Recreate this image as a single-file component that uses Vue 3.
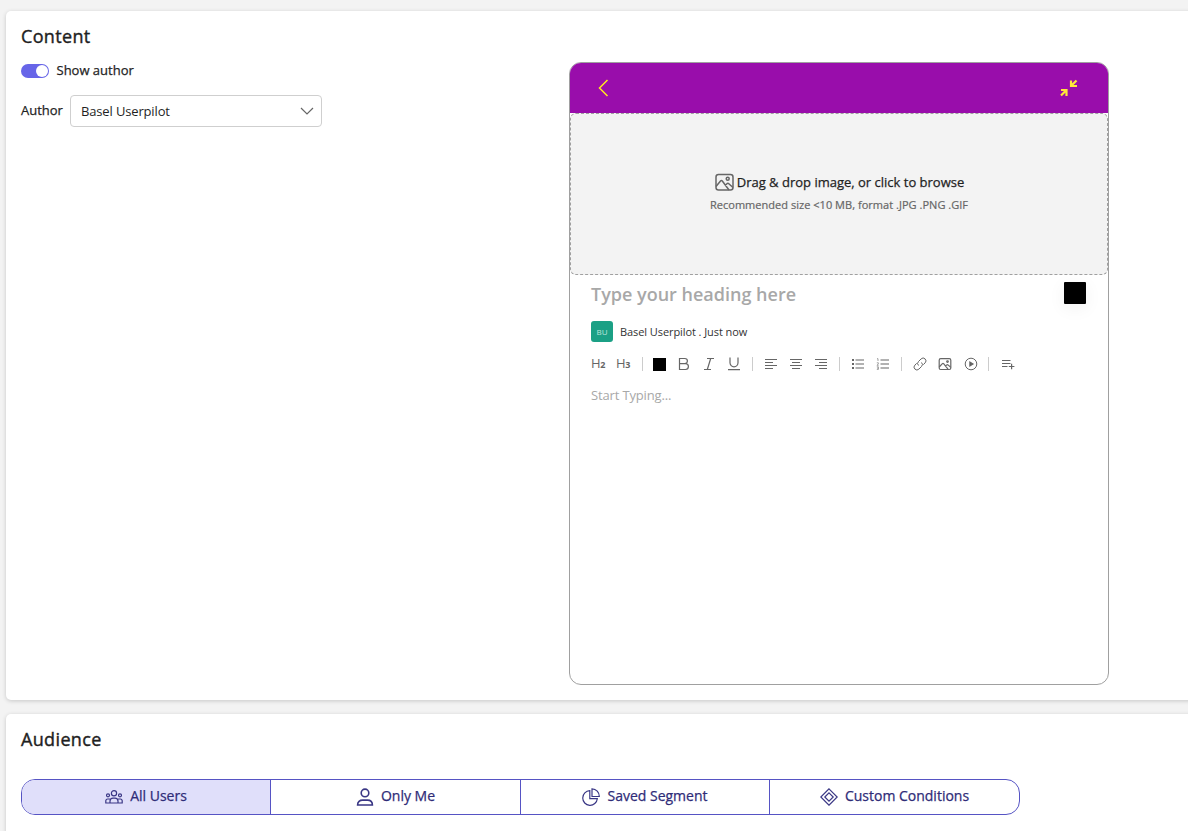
<script setup>
import { ref } from "vue";

const showAuthor = ref(true);
const author = ref("Basel Userpilot");
const audience = ref("all");

const segments = [
  { id: "all", label: "All Users" },
  { id: "me", label: "Only Me" },
  { id: "segment", label: "Saved Segment" },
  { id: "custom", label: "Custom Conditions" },
];
</script>

<template>
  <div class="page">
    <section class="card content-card">
      <div class="settings">
        <h2>Content</h2>
        <div class="toggle-row" @click="showAuthor = !showAuthor">
          <span class="toggle" :class="{ on: showAuthor }"><i></i></span>
          <span class="label">Show author</span>
        </div>
        <div class="author-row">
          <span class="label">Author</span>
          <div class="select">
            <span>{{ author }}</span>
            <svg width="14" height="8" viewBox="0 0 14 8">
              <path d="M1 1l6 6 6-6" fill="none" stroke="#666" stroke-width="1.2" />
            </svg>
          </div>
        </div>
      </div>

      <div class="preview">
        <div class="preview-header">
          <svg width="12" height="18" viewBox="0 0 12 18">
            <path d="M10.500 1L2.500 9l8 8" fill="none" stroke="#ffe81f" stroke-width="1.5" />
          </svg>
          <svg class="collapse" width="18" height="18" viewBox="0 0 18 18">
            <g fill="none" stroke="#ffe83b" stroke-width="2.2">
              <path d="M11 1.500V7h6M11.500 6.500l5-5" />
              <path d="M1 11h5.500v6M6 11.500l-5 5" />
            </g>
          </svg>
        </div>

        <div class="upload">
          <div class="upload-title">
            <svg width="19" height="18" viewBox="0 0 19 18">
              <g fill="none" stroke="#666" stroke-width="1.5">
                <rect x="1" y="1.500" width="17" height="15.500" rx="2.500" />
                <path d="M1 13.500l4.500-5.500c.6-.7 1.200-.7 1.800 0L14 17M10 12.500l2-1.800c.6-.5 1.200-.5 1.800 0L18 14.500" />
                <circle cx="12.700" cy="5.800" r="1.500" />
              </g>
            </svg>
            <span>Drag &amp; drop image, or click to browse</span>
          </div>
          <div class="upload-hint">Recommended size &lt;10 MB, format .JPG .PNG .GIF</div>
        </div>

        <div class="editor">
          <div class="heading-row">
            <div class="heading">Type your heading here</div>
            <span class="swatch"></span>
          </div>
          <div class="byline">
            <span class="avatar">BU</span>
            <span>{{ author }} . Just now</span>
          </div>

          <div class="toolbar">
            <button><span class="h">H<b>2</b></span></button>
            <button><span class="h">H<b>3</b></span></button>
            <i class="sep first"></i>
            <button><span class="color"></span></button>
            <button>
              <svg width="14" height="14" viewBox="0 0 14 14">
                <path d="M2.500 1.500h5.300a2.600 2.600 0 010 5.200H2.500zM2.500 6.700h6a2.900 2.900 0 010 5.800h-6z" />
              </svg>
            </button>
            <button>
              <svg width="14" height="14" viewBox="0 0 14 14">
                <path d="M5 1.500h7M2 12.500h7M8.700 1.500l-3.400 11" />
              </svg>
            </button>
            <button>
              <svg width="14" height="14" viewBox="0 0 14 14">
                <path d="M3 .5v5.300a4 4 0 008 0V.5M1 12.700h12" />
              </svg>
            </button>
            <i class="sep"></i>
            <button>
              <svg width="14" height="14" viewBox="0 0 14 14">
                <path d="M1 2.500h12M1 5.500h8M1 8.500h12M1 11.500h8" />
              </svg>
            </button>
            <button>
              <svg width="14" height="14" viewBox="0 0 14 14">
                <path d="M1 2.500h12M3 5.500h8M1 8.500h12M3 11.500h8" />
              </svg>
            </button>
            <button>
              <svg width="14" height="14" viewBox="0 0 14 14">
                <path d="M1 2.500h12M5 5.500h8M1 8.500h12M5 11.500h8" />
              </svg>
            </button>
            <i class="sep"></i>
            <button>
              <svg width="14" height="14" viewBox="0 0 14 14">
                <path d="M4.500 3H13M4.500 7H13M4.500 11H13" />
                <path class="dots" d="M1 3h2M1 7h2M1 11h2" />
              </svg>
            </button>
            <button>
              <svg width="14" height="14" viewBox="0 0 14 14">
                <path d="M4.500 3H13M4.500 7H13M4.500 11H13" />
                <path class="num" d="M1 1.700h1v2.300M.8 5.800h1.600v1L1 8.300h1.600M.8 9.800h1.600v2.600H.8M1 11.100h1.400" />
              </svg>
            </button>
            <i class="sep"></i>
            <button>
              <svg width="14" height="14" viewBox="0 0 14 14">
                <path
                  class="thin"
                  d="M5.500 8.500a2.800 2.800 0 010-4l2.600-2.600a2.800 2.800 0 014 4L10.300 7.700M8.500 5.500a2.800 2.800 0 010 4l-2.600 2.600a2.800 2.800 0 01-4-4L3.700 6.300"
                />
              </svg>
            </button>
            <button>
              <svg width="14" height="14" viewBox="0 0 14 14">
                <rect x="1.200" y="1.700" width="11.600" height="10.800" rx="1.500" />
                <path d="M1.200 10l3.200-3.400c.4-.4.8-.4 1.200 0l4.600 5.800M7.500 9l1.300-1.100c.4-.3.8-.3 1.200 0l2.800 2.500" />
                <circle cx="9.500" cy="4.600" r=".8" />
              </svg>
            </button>
            <button>
              <svg class="last" width="14" height="14" viewBox="0 0 14 14">
                <circle class="thin" cx="7" cy="7" r="5.800" />
                <path class="play" d="M5.900 5v4L9 7z" />
              </svg>
            </button>
            <i class="sep"></i>
            <button>
              <svg class="last" width="14" height="14" viewBox="0 0 14 14">
                <path d="M1 3.500h8.500M1 6.500h8.500M1 9.500h5.500M7.800 9.500H13.400M10.600 6.800v5.400" />
              </svg>
            </button>
          </div>

          <div class="body-text">Start Typing...</div>
        </div>
      </div>
    </section>

    <section class="card audience-card">
      <h2>Audience</h2>
      <div class="segments">
        <div
          v-for="s in segments"
          :key="s.id"
          class="segment"
          :class="{ active: audience === s.id }"
          @click="audience = s.id"
        >
          <svg v-if="s.id === 'all'" width="18" height="18" viewBox="0 0 18 18">
            <circle cx="9" cy="5.200" r="2.600" />
            <circle cx="3" cy="7.300" r="1.500" />
            <circle cx="15" cy="7.300" r="1.500" />
            <path d="M5 15v-2.200a3 3 0 013-2.600h2a3 3 0 013 2.600V15zM5 15H.8v-2.300A2 2 0 012.700 11h2.200M13 15h4.200v-2.300a2 2 0 00-1.900-1.700h-2.200" />
          </svg>
          <svg v-else-if="s.id === 'me'" class="bold" width="18" height="18" viewBox="0 0 18 18">
            <circle cx="9" cy="4.900" r="3.800" />
            <path d="M1.600 17c0-3.200 2.200-4.900 5-4.900h4.800c2.800 0 5 1.700 5 4.900z" />
          </svg>
          <svg v-else-if="s.id === 'segment'" width="18" height="18" viewBox="0 0 18 18">
            <path d="M7.800 2.700A7.300 7.300 0 1015.300 10.700H7.800z" />
            <path d="M10 .8v7.700h7.300A7.500 7.500 0 0010 .8z" />
          </svg>
          <svg v-else width="18" height="18" viewBox="0 0 18 18">
            <path d="M9 .8L17.200 9 9 17.200.8 9z" />
            <path d="M9 4.800L13.200 9 9 13.200 4.800 9z" />
          </svg>
          <span>{{ s.label }}</span>
        </div>
      </div>
    </section>
  </div>
</template>

<style>
body {
  margin: 0;
  background: #f3f3f3;
  overflow: hidden;
}
</style>

<style scoped>
* {
  box-sizing: border-box;
}
.page {
  display: flex;
  flex-direction: column;
  gap: 14px;
  height: 831px;
  padding: 11px 0 0 6px;
  overflow: hidden;
  background: #f3f3f3;
  color: #1f1f1f;
  font-family: "Open Sans", "Noto Sans", sans-serif;
  font-size: 13px;
}
.card {
  flex: none;
  margin-right: -20px;
  padding: 0 35px 0 15px;
  border-radius: 5px;
  background: #fff;
  box-shadow: 0 1px 4px rgba(0, 0, 0, 0.18);
}
.content-card {
  display: flex;
  height: 689px;
}
.audience-card {
  height: 140px;
}
/* medium weight: regular outlines with a thin stroke */
h2,
.label,
.upload-title span,
.segment span {
  -webkit-text-stroke: 0.25px currentColor;
}
h2 {
  margin: 0;
  padding-top: 13px;
  font-size: 18px;
  font-weight: 400;
  letter-spacing: 0.35px;
  line-height: 25px;
  -webkit-text-stroke-width: 0.4px;
}
.settings {
  width: 548px;
}
.toggle-row {
  display: flex;
  align-items: center;
  gap: 7.5px;
  height: 20px;
  margin-top: 12px;
}
.toggle {
  display: flex;
  width: 28px;
  height: 14px;
  padding: 1px;
  border-radius: 7px;
  background: #aaa;
}
.toggle.on {
  justify-content: flex-end;
  background: #6765e8;
}
.toggle i {
  width: 12px;
  height: 12px;
  border-radius: 50%;
  background: #fff;
}
.label {
  padding-bottom: 2px;
}
.author-row {
  display: flex;
  align-items: center;
  margin-top: 14px;
}
.author-row .label {
  width: 49px;
}
.select {
  display: flex;
  align-items: center;
  justify-content: space-between;
  width: 252px;
  height: 32px;
  padding: 0 7px 0 10px;
  border: 1px solid #cfcfcf;
  border-radius: 4px;
  letter-spacing: -0.15px;
}
.preview {
  display: flex;
  flex-direction: column;
  width: 540px;
  height: 623px;
  margin-top: 51px;
  border: 1px solid #a0a0a0;
  border-radius: 12px;
  overflow: hidden;
}
.preview-header {
  display: flex;
  flex: none;
  align-items: center;
  justify-content: space-between;
  height: 50px;
  padding: 0 30px 0 27px;
  background: #990dab;
}
.upload {
  display: flex;
  flex: none;
  flex-direction: column;
  align-items: center;
  height: 162px;
  padding-top: 57px;
  border: 1px dashed #a0a0a0;
  border-radius: 6px;
  background: #f3f3f3;
}
.upload-title {
  display: flex;
  align-items: center;
  gap: 3px;
  height: 22px;
  padding-left: 1px;
}
.upload-hint {
  margin-top: 3px;
  color: #666;
  font-size: 11px;
  letter-spacing: 0.03px;
  line-height: 17px;
  -webkit-text-stroke: 0.2px currentColor;
}
.editor {
  padding: 0 22px 0 21px;
}
.heading-row {
  display: flex;
  justify-content: space-between;
  height: 39px;
  padding-top: 7px;
}
.heading {
  color: #a8a8a8;
  font-size: 18px;
  font-weight: 600;
  line-height: 25px;
}
.swatch {
  width: 22px;
  height: 22px;
  border-radius: 1px;
  background: #000;
  box-shadow: 0 4px 18px rgba(0, 0, 0, 0.06);
}
.byline {
  display: flex;
  align-items: center;
  gap: 7px;
  height: 36px;
  padding-bottom: 2px;
  color: #333;
  font-size: 11px;
  letter-spacing: -0.08px;
}
.avatar {
  width: 22px;
  height: 21px;
  border-radius: 3px;
  background: #1ba085;
  color: #bfe5dc;
  font-size: 8px;
  line-height: 21px;
  text-align: center;
}
.toolbar {
  display: flex;
  align-items: center;
  height: 28px;
  margin-left: -6px;
}
.toolbar button {
  display: flex;
  align-items: center;
  justify-content: center;
  width: 25px;
  height: 24px;
  padding: 0;
  border: 0;
  background: none;
  color: #666;
  font-family: inherit;
}
.toolbar svg {
  margin-right: 1px;
  fill: none;
  stroke: #666;
  stroke-width: 1.2;
}
.toolbar svg.last {
  margin-right: 0;
}
.toolbar .thin {
  stroke-width: 1;
}
.toolbar .num {
  stroke-width: 0.6;
}
.toolbar .dots {
  stroke-width: 2;
}
.toolbar .play {
  fill: #555;
}
.h {
  padding-left: 1px;
  font-size: 13px;
  line-height: 14px;
  letter-spacing: -0.3px;
}
.h b {
  font-size: 9px;
  font-weight: 700;
}
.color {
  width: 13px;
  height: 13px;
  background: #000;
}
.sep {
  width: 1px;
  height: 14px;
  margin: 0 6px 0 5px;
  background: #ccc;
}
.sep.first {
  margin: 0 4px 0 7px;
}
.body-text {
  padding-top: 8px;
  color: #a8a8a8;
  letter-spacing: -0.15px;
  line-height: 18px;
}
.segments {
  display: grid;
  grid-template-columns: 249px 250px 249px 249px;
  width: 999px;
  height: 36px;
  margin-top: 27px;
  border: 1px solid #5654c4;
  border-radius: 14px;
  overflow: hidden;
}
.segment {
  display: flex;
  align-items: center;
  justify-content: center;
  gap: 7px;
  border-right: 1px solid #5654c4;
  color: #2f2c78;
  font-size: 14px;
}
.segment:last-child {
  border-right: 0;
}
.segment.active {
  background: #e0dffa;
}
.segment span {
  padding-bottom: 3px;
}
.segment svg {
  fill: none;
  stroke: #3a3785;
  stroke-width: 1.2;
}
.segment svg.bold {
  stroke-width: 1.6;
}
</style>
